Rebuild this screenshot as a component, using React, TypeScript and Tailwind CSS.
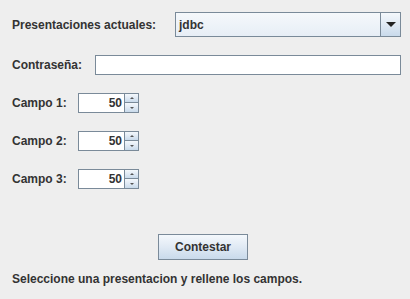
import React from "react";

const grad = "bg-[linear-gradient(180deg,#f4f8fc_0%,#e2ebf5_45%,#c9daeb_100%)]";

function Spinner({ value }: { value: number }) {
  return (
    <div className="flex h-[20px] w-[61px]">
      <div className="flex h-full w-[46px] items-center justify-end border border-[#7a8a99] border-r-0 bg-white pr-[2px] text-[12px]">
        {value}
      </div>
      <div className="flex h-full w-[15px] flex-col border border-[#7a8a99]">
        <div className={`flex h-1/2 items-center justify-center border-b border-[#7a8a99] ${grad}`}>
          <span className="block h-0 w-0 border-x-[2px] border-b-[2px] border-x-transparent border-b-[#555]" />
        </div>
        <div className={`flex h-1/2 items-center justify-center ${grad}`}>
          <span className="block h-0 w-0 border-x-[2px] border-t-[2px] border-x-transparent border-t-[#555]" />
        </div>
      </div>
    </div>
  );
}

export default function App() {
  const campos = [1, 2, 3];
  return (
    <div className="h-[299px] w-[410px] bg-[#eeeeee] pt-[12px] pl-[12px] pr-[9px] font-['Liberation_Sans',Arial,sans-serif] text-[12px] font-bold text-[#333333]">
      {/* combo row */}
      <div className="flex h-[25px] items-center">
        <span className="w-[163px]">Presentaciones actuales:</span>
        <div className="flex h-full flex-1 border border-[#7a8a99]">
          <div className="flex flex-1 items-center bg-[linear-gradient(180deg,#f5f8fb_0%,#e7eef6_100%)] pl-[3px] text-[12px]">
            jdbc
          </div>
          <div className={`flex w-[20px] items-center justify-center border-l border-[#7a8a99] ${grad}`}>
            <span className="block h-0 w-0 border-x-[5px] border-t-[5px] border-x-transparent border-t-[#222]" />
          </div>
        </div>
      </div>

      {/* password row */}
      <div className="mt-[18px] flex h-[20px] items-center">
        <span className="w-[83px]">Contraseña:</span>
        <div className="h-full flex-1 border border-[#7a8a99] bg-white" />
      </div>

      {campos.map((n) => (
        <div key={n} className="mt-[18px] flex h-[20px] items-center">
          <span className="w-[66px]">Campo {n}:</span>
          <Spinner value={50} />
        </div>
      ))}

      <div className="mt-[45px] flex h-[26px] pl-[146px]">
        <button
          type="button"
          className={`flex h-full w-[90px] items-center justify-center border border-[#7a8a99] ${grad} text-[12px] font-bold text-[#333333]`}
        >
          Contestar
        </button>
      </div>

      <div className="mt-[12px] leading-[14px]">Seleccione una presentacion y rellene los campos.</div>
    </div>
  );
}
